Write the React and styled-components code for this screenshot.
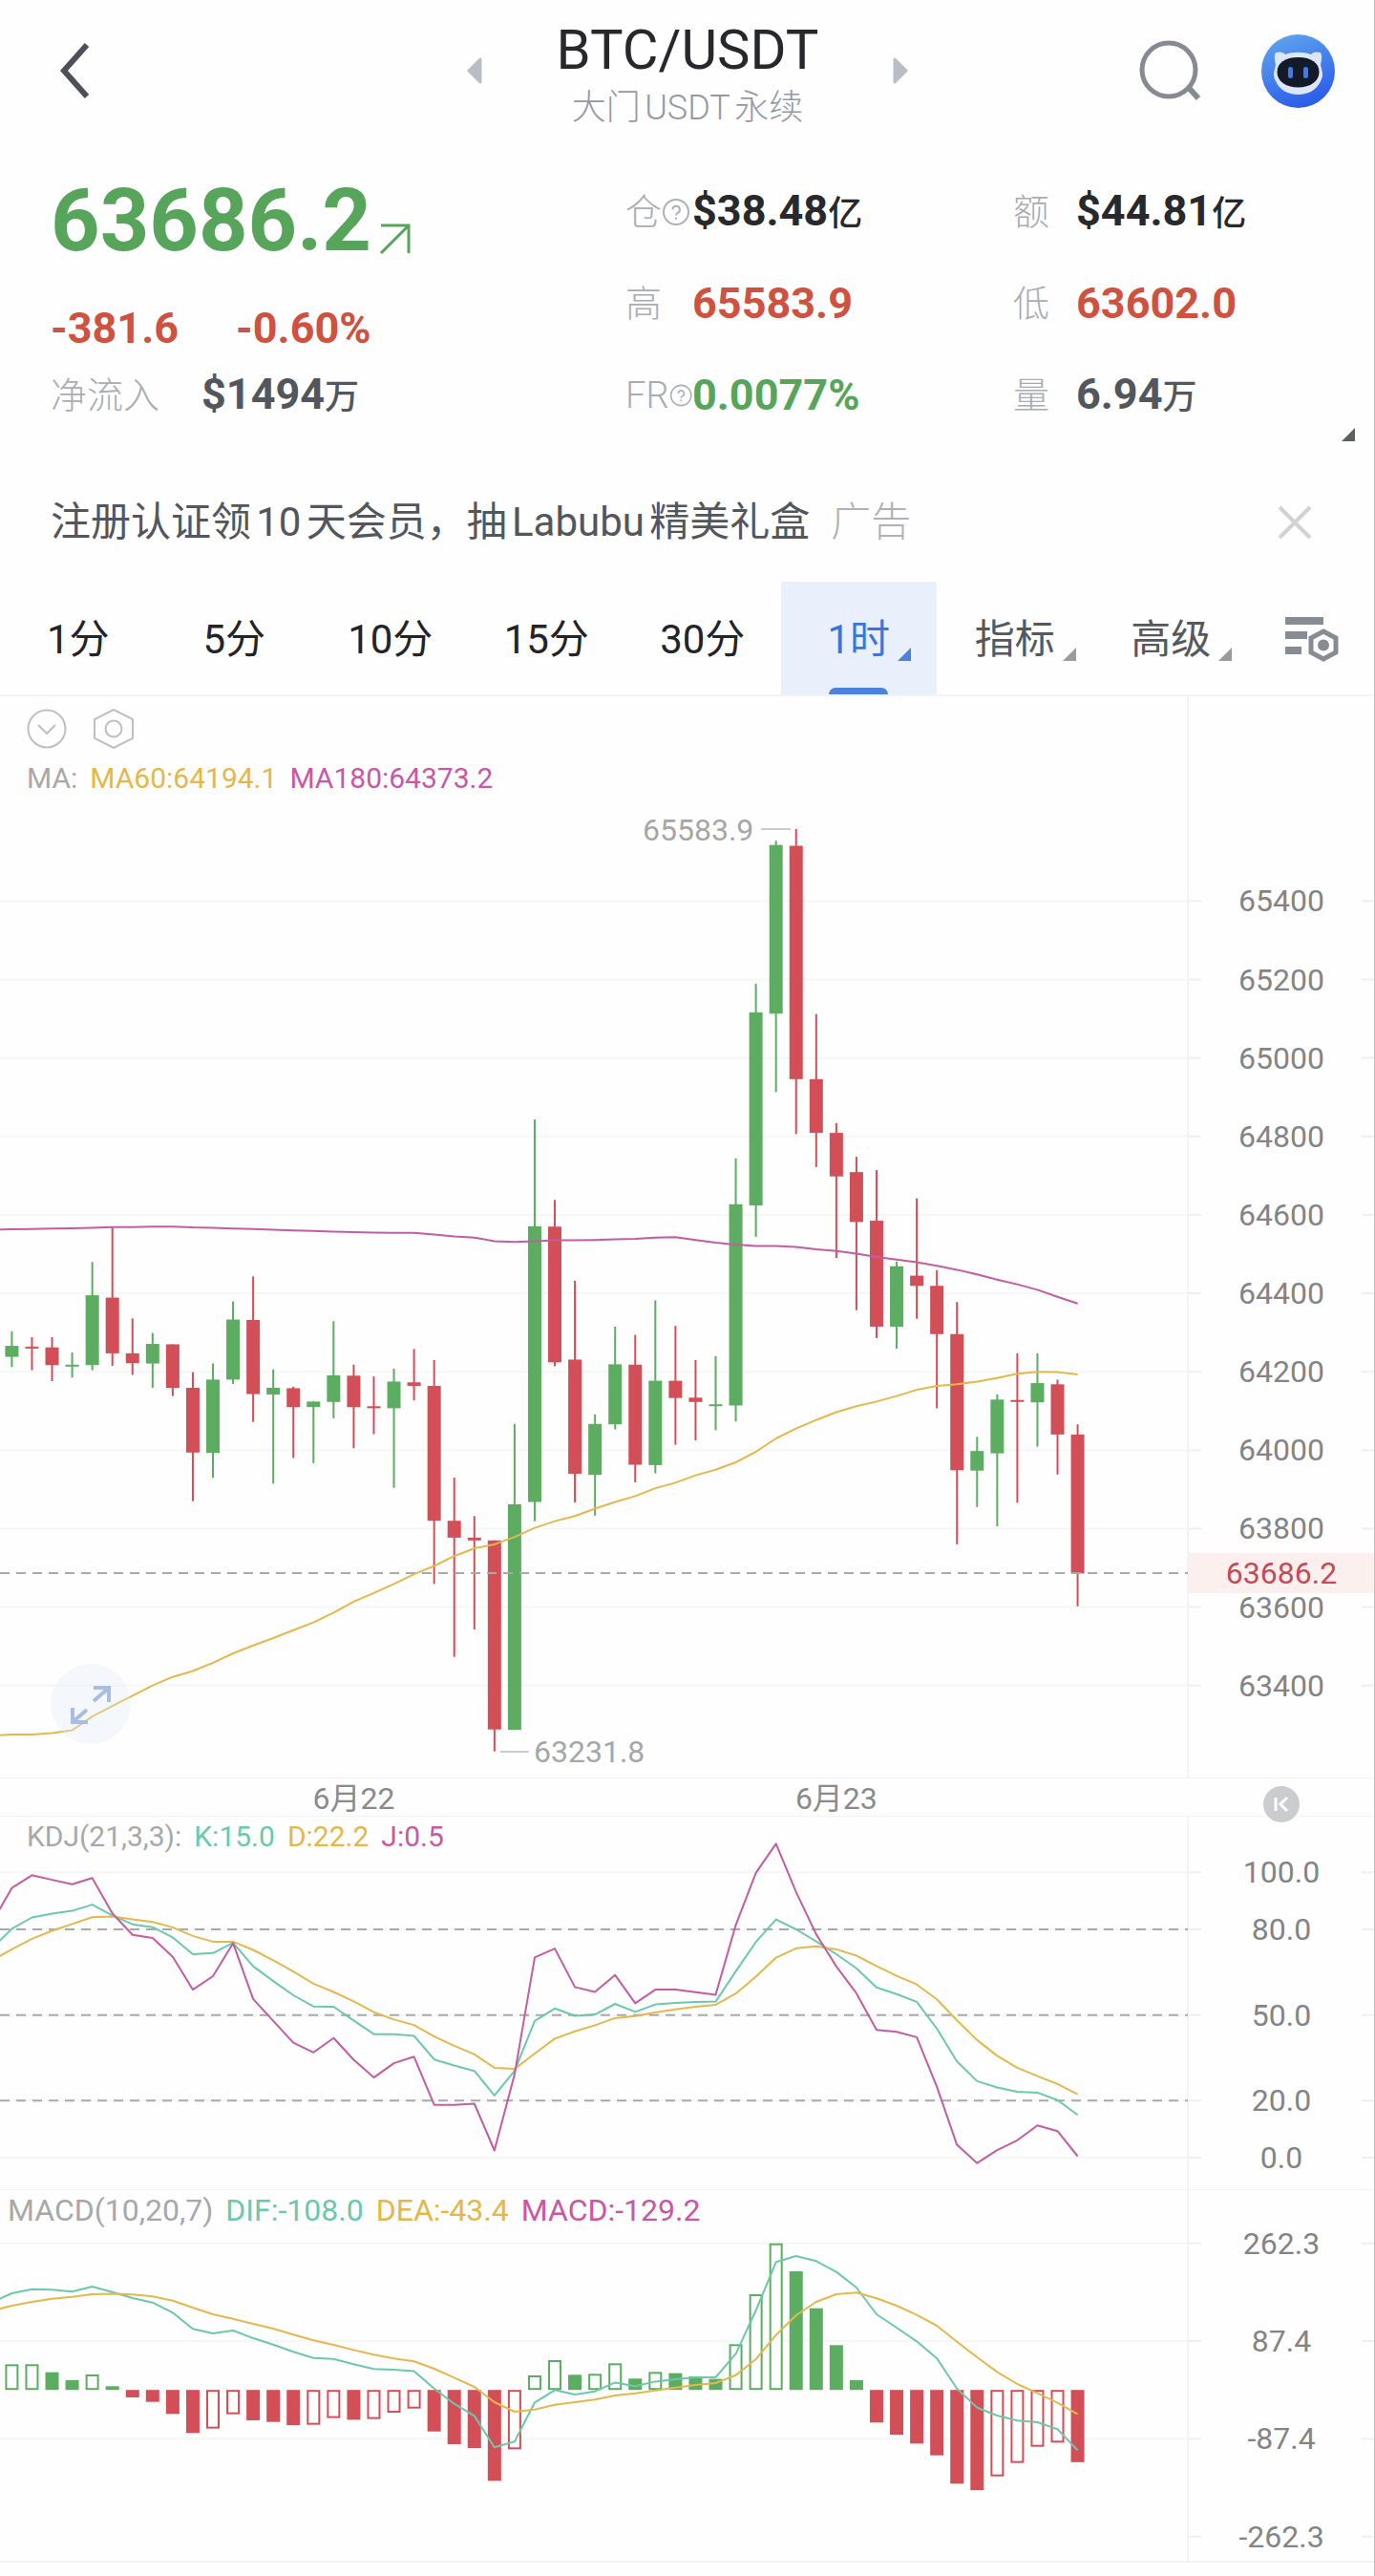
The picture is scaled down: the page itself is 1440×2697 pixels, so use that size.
import { useState } from 'react';
import styled, { createGlobalStyle } from 'styled-components';

const GREEN = '#5cad61';
const RED = '#d24f58';
const TEAL = '#6cc8ab';
const YELLOW = '#e3b84c';
const PURPLE = '#c25da4';

const GlobalStyle = createGlobalStyle`
    body {
        margin: 0;
        background: #fefefe;
        font-family: Roboto, 'Noto Sans CJK SC', sans-serif;
    }

    button {
        padding: 0;
        border: none;
        background: none;
        font: inherit;
        color: inherit;
        cursor: pointer;
    }

    svg {
        display: block;
    }
`;

const Page = styled.main`
    position: relative;
    padding-bottom: 14px;

    &:after {
        content: '';
        position: absolute;
        top: 0;
        right: 0;
        bottom: 0;
        width: 1px;
        background: #bdbfc2;
    }
`;

const Header = styled.header`
    display: grid;
    grid-template-columns: 1fr 462px 1fr;
    align-items: center;
    height: 144px;
    padding: 2px 42px 0;
`;

const HeaderSide = styled.div`
    display: flex;
    align-items: center;
    justify-content: ${props => props.$end ? 'flex-end' : 'flex-start'};
    gap: 64px;
    padding-left: ${props => props.$end ? '0' : '20px'};
`;

const PairSwitcher = styled.div`
    display: flex;
    align-items: center;
    justify-content: space-between;
`;

const PairTitle = styled.div`
    padding-top: 10px;
    text-align: center;
`;

const PairName = styled.h1`
    margin: 0;
    font-size: 58px;
    font-weight: 400;
    line-height: 68px;
    color: #26282b;
`;

const PairMarket = styled.p`
    margin: 0;
    font-size: 36px;
    font-weight: 300;
    line-height: 54px;
    color: #9599a3;
    text-autospace: normal;
`;

const Stats = styled.section`
    position: relative;
    display: grid;
    grid-template-columns: 602fr 406fr 336fr;
    padding: 28px 43px 21px 53px;
`;

const LastPrice = styled.div`
    display: flex;
    align-items: center;
    gap: 8px;
    height: 116px;
    margin-bottom: 20px;
    font-size: 90px;
    font-weight: 700;
    line-height: 116px;
    color: #57a55b;

    svg {
        margin-top: 36px;
    }
`;

const Change = styled.div`
    display: flex;
    gap: 60px;
    height: 68px;
    font-size: 45px;
    font-weight: 700;
    line-height: 68px;
    color: #cf5240;
`;

const NetFlow = styled.div`
    display: flex;
    align-items: center;
    gap: 44px;
    height: 72px;
`;

const StatRow = styled.div`
    display: grid;
    grid-template-columns: ${props => props.$label}px 1fr;
    align-items: center;
    height: 96px;
`;

const StatLabel = styled.span`
    display: flex;
    align-items: center;
    font-size: 38px;
    font-weight: 300;
    line-height: 60px;
    color: #a9adb2;
    white-space: nowrap;
`;

const StatValue = styled.span`
    font-size: 45px;
    font-weight: 700;
    line-height: 60px;
    color: ${props => props.$color || '#27292c'};
    white-space: nowrap;
`;

const Unit = styled.span`
    font-size: 36px;
    font-weight: 500;
`;

const ExpandCorner = styled.button`
    position: absolute;
    right: 21px;
    bottom: 21px;
`;

const Notice = styled.section`
    display: flex;
    align-items: center;
    height: 126px;
    box-sizing: border-box;
    padding: 2px 66px 0 53px;
    font-size: 42px;
    line-height: 60px;
    text-autospace: normal;
`;

const NoticeLink = styled.a`
    color: #53565b;
    text-decoration: none;
`;

const NoticeTag = styled.span`
    flex: 1;
    margin-left: 22px;
    font-weight: 300;
    color: #aeb1b6;
`;

const Tabs = styled.nav`
    display: grid;
    grid-template-columns: repeat(8, 1fr) 132px;
    height: 120px;
    box-sizing: border-box;
    border-bottom: 2px solid #f2f3f4;
`;

const Tab = styled.button`
    position: relative;
    padding-top: 4px;
    font-size: 42px;
    line-height: 60px;
    color: ${props => props.$active ? '#3e74da' : props.$menu ? '#55585d' : '#222427'};
    background: ${props => props.$active ? '#e9f0fb' : 'transparent'};

    &:after {
        content: '';
        position: absolute;
        display: ${props => props.$active ? 'block' : 'none'};
        left: 50%;
        bottom: 0;
        width: 62px;
        height: 7px;
        margin-left: -31px;
        border-radius: 7px 7px 0 0;
        background: #4d82dc;
    }
`;

const TabLabel = styled.span`
    position: relative;
`;

const TabCorner = styled.svg`
    position: absolute;
    left: 100%;
    bottom: 2px;
    margin-left: 8px;
    color: ${props => props.$active ? '#4d82dc' : '#9b9b9b'};
`;

const TabSettings = styled.button`
    display: flex;
    align-items: center;
    justify-content: center;
    padding-top: 2px;
`;

const Panel = styled.section`
    position: relative;
`;

const Chart = styled.svg`
    width: 100%;
    height: auto;
    font-family: Roboto, 'Noto Sans CJK SC', sans-serif;
    font-size: 32px;
`;

const ChartTools = styled.div`
    position: absolute;
    top: 13px;
    left: 28px;
    display: flex;
    gap: 28px;
`;

const Legend = styled.div`
    position: absolute;
    top: ${props => props.$top}px;
    left: ${props => props.$left}px;
    display: flex;
    gap: 13px;
    font-size: ${props => props.$large ? '32px' : '30px'};
    line-height: 40px;
    white-space: nowrap;
`;

const LegendItem = styled.span`
    color: ${props => props.$color || '#a8a8a8'};
`;

const FullScreen = styled.button`
    position: absolute;
    left: 53px;
    bottom: 36px;
    width: 84px;
    height: 84px;
    display: flex;
    align-items: center;
    justify-content: center;
    border-radius: 50%;
    background: rgba(222, 234, 252, 0.3);
`;

const LatestButton = styled.button`
    position: absolute;
    top: 8px;
    right: 79px;
    z-index: 1;
`;

// high, body top, body bottom, low, direction
const candles = [
  [64303, 64266, 64238, 64212, 1], [64288, 64264, 64264, 64204, 0], [64288, 64262, 64217, 64176, 0],
  [64249, 64218, 64216, 64185, 1], [64480, 64395, 64217, 64204, 1], [64569, 64389, 64247, 64215, 0],
  [64336, 64247, 64222, 64192, 0], [64299, 64271, 64221, 64159, 1], [64270, 64270, 64159, 64138, 0],
  [64199, 64159, 63994, 63870, 0], [64221, 64180, 63993, 63930, 1], [64379, 64333, 64180, 64169, 1],
  [64443, 64332, 64143, 64072, 0], [64206, 64159, 64142, 63915, 1], [64162, 64158, 64110, 63980, 0],
  [64125, 64124, 64110, 63967, 1], [64329, 64191, 64123, 64081, 1], [64218, 64190, 64110, 64005, 0],
  [64188, 64112, 64107, 64041, 0], [64208, 64175, 64107, 63904, 1], [64258, 64173, 64164, 64127, 0],
  [64230, 64164, 63820, 63659, 0], [63930, 63820, 63777, 63473, 0], [63832, 63777, 63770, 63543, 0],
  [63770, 63770, 63288, 63232, 0], [64067, 63862, 63287, 63287, 1], [64843, 64571, 63868, 63819, 1],
  [64638, 64570, 64224, 64214, 0], [64432, 64231, 63940, 63867, 0], [64091, 64067, 63937, 63833, 1],
  [64315, 64219, 64066, 64053, 1], [64294, 64218, 63963, 63918, 0], [64382, 64177, 63962, 63941, 1],
  [64317, 64177, 64133, 64014, 0], [64230, 64134, 64123, 64025, 0], [64240, 64117, 64114, 64051, 1],
  [64744, 64627, 64114, 64073, 1], [65189, 65116, 64624, 64544, 1], [65554, 65543, 65113, 64913, 1],
  [65584, 65541, 64946, 64806, 0], [65112, 64946, 64809, 64722, 0], [64834, 64809, 64698, 64490, 0],
  [64748, 64709, 64582, 64357, 0], [64714, 64585, 64315, 64286, 0], [64481, 64469, 64315, 64259, 1],
  [64642, 64445, 64419, 64335, 0], [64459, 64419, 64296, 64107, 0], [64378, 64296, 63949, 63760, 0],
  [64034, 63998, 63948, 63855, 1], [64142, 64129, 63992, 63806, 1], [64247, 64128, 64125, 63866, 0],
  [64247, 64171, 64122, 64009, 1], [64180, 64168, 64040, 63938, 0], [64066, 64040, 63686, 63602, 0],
];

// every line series starts one step left of the first candle
const ma180 = [
  64562, 64563, 64564, 64565, 64566, 64567, 64569, 64569, 64570, 64570, 64568, 64567, 64565, 64564,
  64562, 64560, 64559, 64557, 64556, 64555, 64554, 64554, 64550, 64545, 64542, 64533, 64531, 64533,
  64535, 64535, 64536, 64538, 64539, 64542, 64543, 64536, 64529, 64524, 64521, 64521, 64518, 64512,
  64508, 64501, 64493, 64486, 64479, 64470, 64460, 64448, 64435, 64423, 64409, 64391, 64374,
];

const ma60 = [
  63272, 63275, 63275, 63279, 63286, 63321, 63348, 63374, 63400, 63422, 63437, 63458, 63482, 63502,
  63521, 63541, 63561, 63586, 63614, 63636, 63659, 63684, 63705, 63730, 63750, 63760, 63779, 63802,
  63819, 63832, 63851, 63868, 63883, 63903, 63917, 63936, 63950, 63969, 63996, 64030, 64055, 64077,
  64097, 64112, 64124, 64138, 64154, 64164, 64168, 64175, 64184, 64195, 64200, 64199, 64193,
];

const kdjK = [
  73.3, 80.2, 84.2, 85.5, 86.5, 88.7, 84.9, 81.8, 80.8, 77.2, 71.3, 71.7, 75.3, 67.1, 61.9, 56.9, 53,
  52.9, 48.1, 43.3, 43.3, 42.7, 34.4, 32.3, 30.4, 21.8, 30.4, 47.9, 52.3, 49.7, 50.2, 53.9, 51.1, 53.7,
  54.2, 54.6, 54.7, 65.3, 75.6, 83.5, 80, 75.8, 71.3, 66.4, 59.7, 57.3, 54.6, 45.2, 33.7, 26.8, 24.6,
  23.1, 22.8, 20.2, 15,
];

const kdjD = [
  69.1, 73, 76.7, 79.5, 81.9, 84.3, 84.5, 83.5, 82.6, 80.7, 77.7, 75.7, 75.7, 72.8, 69.2, 65.2, 61,
  58.1, 54.8, 51, 48.4, 46.5, 42.5, 39.2, 36.2, 31.5, 31.1, 36.5, 41.7, 44.3, 46.4, 48.9, 49.6, 50.9,
  52, 52.9, 53.6, 57.5, 63.4, 70.1, 73.4, 74.1, 73, 70.8, 67.2, 63.7, 60.7, 55.5, 48.1, 41.2, 35.7,
  31.5, 28.6, 25.8, 22.2,
];

const kdjJ = [
  82.3, 94.5, 99, 97.4, 95.8, 98, 85.6, 78.1, 77, 70.4, 58.9, 63.6, 75.2, 55.6, 47.9, 40.3, 36.9, 41.9,
  34.3, 28.1, 33.1, 35.4, 18.5, 18.5, 18.9, 2.5, 29.2, 70.2, 73.3, 59.8, 58.1, 64, 54.1, 58.9, 58.9,
  58, 57.1, 81.6, 99.8, 110, 93.1, 78.3, 67, 57.6, 44.8, 44.1, 42.2, 24.8, 4.5, -1.9, 2.6, 6.1, 11.3,
  9.3, 0.5,
];

const dif = [
  156.4, 172.9, 180.3, 179.2, 175.8, 184.9, 175.2, 164.4, 156.4, 138.2, 109.1, 101.2, 106.3, 92.6,
  81.2, 68.1, 57.3, 55.6, 45.9, 37.4, 36.2, 33.9, 2.6, -24.7, -46.4, -102.7, -92.5, -22.4, -0.2, -8.2,
  -2.5, 13.4, 6.6, 15.1, 19.1, 22.6, 22.6, 64.7, 142.2, 228.7, 239.5, 230.4, 211.1, 183.2, 135.3,
  111.4, 86.9, 56.2, 2.6, -31.6, -45.8, -54.9, -57.8, -70.3, -108,
];

const dea = [
  141.6, 150.7, 157.5, 163.2, 166.6, 171.2, 172.3, 170.6, 167.2, 159.8, 147.3, 135.3, 127.3, 118.2,
  109.7, 98.9, 88.6, 80.6, 71.5, 63, 56.2, 51, 37.9, 22, 5.5, -21.9, -39, -35, -26.4, -21.9, -17.3,
  -9.9, -5.9, -0.8, 4.3, 8.9, 12.3, 26.5, 55, 98.3, 133.6, 157.5, 171.2, 174.1, 163.8, 150.7, 134.2,
  114.8, 86.3, 58.4, 32.2, 10.6, -5.9, -23, -43.4,
];

const macd = [
  45.9, 46, 31.7, 17.4, 27.7, 6.6, -13.3, -21.3, -42.9, -77.1, -69.1, -43.5, -54.3, -57.2, -62.9,
  -62.3, -50.3, -53.2, -52, -40.7, -33.3, -74.3, -97, -103.9, -162.5, -106.2, 26, 53.3, 27.1, 28.8,
  47.6, 20.3, 32.2, 30, 24.3, 19.7, 81.8, 171.2, 262.3, 212.2, 146.1, 80.1, 17.4, -58.3, -80, -95.9,
  -117, -167.7, -179.1, -154.6, -130.6, -101.6, -94.2, -129.2,
];

const PLOT = 1244;
const WIDTH = 1440;
const AXIS_CENTER = 1342;

const xAt = i => 12.4 + i * 21.06;
const priceY = v => 214.4 + (65400 - v) * 0.41065;
const kdjY = v => 58.3 + (100 - v) * 2.987;
const macdY = v => 209.2 - v * 0.5853;

const Line = ({ data, scale, color }) => (
  <polyline
    points={data.map((v, i) => `${xAt(i - 1).toFixed(1)},${scale(v).toFixed(1)}`).join(' ')}
    fill="none"
    stroke={color}
    strokeWidth="2"
    strokeLinejoin="round"
  />
);

const Dashed = ({ y }) => (
  <line x1="0" x2={PLOT} y1={y} y2={y} stroke="#a9a9a9" strokeWidth="2" strokeDasharray="10 7" />
);

const AxisMark = ({ y, label, grid = true }) => (
  <g>
    {grid && <line x1="0" x2={PLOT} y1={y} y2={y} stroke="#f5f6f6" strokeWidth="2" />}
    <line x1={PLOT} x2={PLOT + 14} y1={y} y2={y} stroke="#efeff0" strokeWidth="2" />
    <line x1={WIDTH - 14} x2={WIDTH} y1={y} y2={y} stroke="#efeff0" strokeWidth="2" />
    <text x={AXIS_CENTER} y={y + 11} textAnchor="middle" fill="#848484">{label}</text>
  </g>
);

const AxisBorder = ({ height }) => (
  <g stroke="#f2f3f4" strokeWidth="2">
    <line x1={PLOT} x2={PLOT} y1="0" y2={height} />
    <line x1="0" x2={WIDTH} y1={height} y2={height} />
  </g>
);

const PriceChart = () => (
  <Chart viewBox="0 0 1440 1133" role="img" aria-label="BTC/USDT">
    <AxisBorder height={1133} />
    {Array.from({ length: 11 }, (_, i) => 65400 - i * 200).map(price => (
      <AxisMark key={price} y={priceY(price)} label={price} />
    ))}
    {candles.map(([high, top, bottom, low, up], i) => {
      const color = up ? GREEN : RED;
      return (
        <g key={i} fill={color}>
          <rect x={xAt(i) - 1} y={priceY(high)} width="2" height={priceY(low) - priceY(high)} />
          <rect x={xAt(i) - 7} y={priceY(top)} width="14" height={Math.max(priceY(bottom) - priceY(top), 2)} />
        </g>
      );
    })}
    <Dashed y={918} />
    <Line data={ma180} scale={priceY} color={PURPLE} />
    <Line data={ma60} scale={priceY} color={YELLOW} />
    <g stroke="#cccccc" strokeWidth="2">
      <line x1="797" x2="828" y1="139" y2="139" />
      <line x1="524" x2="554" y1="1105" y2="1105" />
    </g>
    <text x="673" y="151" fill="#a6a6a6">65583.9</text>
    <text x="559" y="1116" fill="#a6a6a6">63231.8</text>
    <rect x={PLOT + 1} y="897" width="195" height="42" fill="#fcf0ef" />
    <text x={AXIS_CENTER} y="929" textAnchor="middle" fill="#c44b55">63686.2</text>
  </Chart>
);

const TimeChart = () => (
  <Chart viewBox="0 0 1440 40" role="img" aria-label="6月22 6月23">
    <line x1="0" x2={WIDTH} y1="40" y2="40" stroke="#f2f3f4" strokeWidth="2" />
    <text x={xAt(17)} y="32" textAnchor="middle" fill="#8a8a8a">6月22</text>
    <text x={xAt(41)} y="32" textAnchor="middle" fill="#8a8a8a">6月23</text>
  </Chart>
);

const KdjChart = () => (
  <Chart viewBox="0 0 1440 391" role="img" aria-label="KDJ">
    <AxisBorder height={391} />
    {[100, 80, 50, 20, 0].map(v => (
      <AxisMark key={v} y={kdjY(v)} label={v.toFixed(1)} />
    ))}
    {[80, 50, 20].map(v => <Dashed key={v} y={kdjY(v)} />)}
    <Line data={kdjK} scale={kdjY} color={TEAL} />
    <Line data={kdjD} scale={kdjY} color={YELLOW} />
    <Line data={kdjJ} scale={kdjY} color={PURPLE} />
  </Chart>
);

const MacdChart = () => (
  <Chart viewBox="0 0 1440 390" role="img" aria-label="MACD">
    <AxisBorder height={389} />
    {[262.3, 87.4, -87.4, -262.3].map(v => (
      <AxisMark key={v} y={macdY(v)} label={v.toFixed(1)} grid={v > -200} />
    ))}
    {macd.map((v, i) => {
      // a bar is hollow while the histogram is rising
      const hollow = i === 0 || v > macd[i - 1];
      const color = v > 0 ? GREEN : RED;
      const inset = hollow ? 1 : 0;
      return (
        <rect
          key={i}
          x={xAt(i) - 7 + inset}
          y={Math.min(macdY(v), macdY(0)) + inset}
          width={14 - inset * 2}
          height={Math.abs(macdY(v) - macdY(0)) - inset * 2}
          fill={hollow ? '#fefefe' : color}
          stroke={hollow ? color : 'none'}
          strokeWidth="2"
        />
      );
    })}
    <Line data={dif} scale={macdY} color={TEAL} />
    <Line data={dea} scale={macdY} color={YELLOW} />
  </Chart>
);

const HelpIcon = () => (
  <svg width="30" height="30" viewBox="0 0 30 30" fill="none" stroke="#adb1b6" strokeWidth="2">
    <circle cx="15" cy="15" r="13" />
    <path d="M11.500 12.500a3.700 3.700 0 1 1 5.200 3.300c-1.200.6-1.700 1.200-1.700 2.700M15 20.500v2.300" />
  </svg>
);

const CornerIcon = () => <path d="M14 0V14H0Z" fill="currentColor" />;

const RobotIcon = () => (
  <svg width="77" height="77" viewBox="0 0 77 77">
    <defs>
      <linearGradient id="robot" x1="0.2" y1="0" x2="0.6" y2="1">
        <stop offset="0" stopColor="#5fa5ee" />
        <stop offset="1" stopColor="#2b5be9" />
      </linearGradient>
    </defs>
    <circle cx="38.500" cy="38.500" r="38.500" fill="url(#robot)" />
    <path
      d="M15 19c4-1 8-1 10 2 8-3 19-3 27 0 2-3 6-3 10-2 2 4 1 8 0 13 1 4 2 7 2 10 0 3-1 5-2 7-4 9-13 14-23.500 14S19 58 15 49c-1-2-2-4-2-7 0-3 1-6 2-10-1-5-2-9 0-13z"
      fill="#dde6f8"
    />
    <path d="M38.500 24c14 0 22 6 22 15.500s-9 16-22 16-22-6.500-22-16 8-15.500 22-15.500z" fill="#131b2b" />
    <rect x="28" y="34" width="5" height="12" rx="2.500" fill="#4379ef" />
    <rect x="44" y="34" width="5" height="12" rx="2.500" fill="#4379ef" />
  </svg>
);

const tabs = [
  { label: '1分' },
  { label: '5分' },
  { label: '10分' },
  { label: '15分' },
  { label: '30分' },
  { label: '1时', corner: true },
  { label: '指标', corner: true, menu: true },
  { label: '高级', corner: true, menu: true },
];

const App = () => {
  const [active, setActive] = useState('1时');

  return (
    <Page>
      <GlobalStyle />

      <Header>
        <HeaderSide>
          <button aria-label="返回">
            <svg width="32" height="60" viewBox="0 0 32 60" fill="none" stroke="#4d5157" strokeWidth="6">
              <path d="M29 3L5 30L29 57" />
            </svg>
          </button>
        </HeaderSide>
        <PairSwitcher>
          <button aria-label="上一个">
            <svg width="17" height="28" viewBox="0 0 17 28">
              <path d="M14 2L2 14L14 26Z" fill="#b9bec6" stroke="#b9bec6" strokeWidth="3" strokeLinejoin="round" />
            </svg>
          </button>
          <PairTitle>
            <PairName>BTC/USDT</PairName>
            <PairMarket>大门USDT永续</PairMarket>
          </PairTitle>
          <button aria-label="下一个">
            <svg width="17" height="28" viewBox="0 0 17 28">
              <path d="M3 2L15 14L3 26Z" fill="#b9bec6" stroke="#b9bec6" strokeWidth="3" strokeLinejoin="round" />
            </svg>
          </button>
        </PairSwitcher>
        <HeaderSide $end>
          <button aria-label="搜索">
            <svg width="64" height="64" viewBox="0 0 64 64" fill="none" stroke="#868a92" strokeWidth="5">
              <circle cx="31" cy="31" r="28" />
              <path d="M52 50L62 61" strokeWidth="6" />
            </svg>
          </button>
          <button aria-label="助手">
            <RobotIcon />
          </button>
        </HeaderSide>
      </Header>

      <Stats>
        <div>
          <LastPrice>
            63686.2
            <svg width="34" height="34" viewBox="0 0 34 34" fill="none" stroke="#57a55b" strokeWidth="3">
              <path d="M2 3H31V32M31 3L2 32" />
            </svg>
          </LastPrice>
          <Change>
            <span>-381.6</span>
            <span>-0.60%</span>
          </Change>
          <NetFlow>
            <StatLabel>净流入</StatLabel>
            <StatValue $color="#53565d">$1494<Unit>万</Unit></StatValue>
          </NetFlow>
        </div>
        <div>
          <StatRow $label={70}>
            <StatLabel>仓<HelpIcon /></StatLabel>
            <StatValue>$38.48<Unit>亿</Unit></StatValue>
          </StatRow>
          <StatRow $label={70}>
            <StatLabel>高</StatLabel>
            <StatValue $color="#cf5240">65583.9</StatValue>
          </StatRow>
          <StatRow $label={70}>
            <StatLabel>FR<HelpIcon /></StatLabel>
            <StatValue $color="#57a55b">0.0077%</StatValue>
          </StatRow>
        </div>
        <div>
          <StatRow $label={66}>
            <StatLabel>额</StatLabel>
            <StatValue>$44.81<Unit>亿</Unit></StatValue>
          </StatRow>
          <StatRow $label={66}>
            <StatLabel>低</StatLabel>
            <StatValue $color="#cf5240">63602.0</StatValue>
          </StatRow>
          <StatRow $label={66}>
            <StatLabel>量</StatLabel>
            <StatValue $color="#53565d">6.94<Unit>万</Unit></StatValue>
          </StatRow>
        </div>
        <ExpandCorner aria-label="展开">
          <svg width="14" height="14" viewBox="0 0 14 14" color="#5c6065"><CornerIcon /></svg>
        </ExpandCorner>
      </Stats>

      <Notice>
        <NoticeLink href="#">注册认证领10天会员，抽Labubu精美礼盒</NoticeLink>
        <NoticeTag>广告</NoticeTag>
        <button aria-label="关闭">
          <svg width="36" height="36" viewBox="0 0 36 36" stroke="#d0d2d4" strokeWidth="4">
            <path d="M2 2L34 34M34 2L2 34" />
          </svg>
        </button>
      </Notice>

      <Tabs>
        {tabs.map(tab => (
          <Tab
            key={tab.label}
            $active={tab.label === active}
            $menu={tab.menu}
            onClick={() => setActive(tab.label)}
          >
            <TabLabel>
              {tab.label}
              {tab.corner && (
                <TabCorner $active={tab.label === active} width="14" height="14" viewBox="0 0 14 14">
                  <CornerIcon />
                </TabCorner>
              )}
            </TabLabel>
          </Tab>
        ))}
        <TabSettings aria-label="设置">
          <svg width="58" height="50" viewBox="0 0 58 50" fill="#868b94">
            <path d="M1 2H41V10H1ZM1 17H24V25H1ZM1 33H18V41H1Z" />
            <path d="M41 17L54 24V39L41 46L28 39V24Z" fill="none" stroke="#868b94" strokeWidth="5" />
            <circle cx="41" cy="31.500" r="6" />
          </svg>
        </TabSettings>
      </Tabs>

      <Panel>
        <PriceChart />
        <ChartTools>
          <button aria-label="收起">
            <svg width="42" height="42" viewBox="0 0 42 42" fill="none" stroke="#bcbfc3" strokeWidth="2">
              <circle cx="21" cy="21" r="19.500" />
              <path d="M12 17L21 26L30 17" />
            </svg>
          </button>
          <button aria-label="指标设置">
            <svg width="42" height="42" viewBox="0 0 42 42" fill="none" stroke="#bcbfc3" strokeWidth="2">
              <path d="M21 1L41 11V31L21 41L1 31V11Z" />
              <circle cx="21" cy="21" r="8.500" />
            </svg>
          </button>
        </ChartTools>
        <Legend $top={66} $left={28}>
          <LegendItem>MA:</LegendItem>
          <LegendItem $color="#e5b748">MA60:64194.1</LegendItem>
          <LegendItem $color="#c957a6">MA180:64373.2</LegendItem>
        </Legend>
        <FullScreen aria-label="全屏">
          <svg width="44" height="44" viewBox="0 0 44 44" fill="none" stroke="#a9bde4" strokeWidth="4">
            <path d="M25 5H41V20M41 5L25 19M3 26V41H19M3 41L18 28" />
          </svg>
        </FullScreen>
      </Panel>

      <Panel>
        <TimeChart />
        <LatestButton aria-label="最新">
          <svg width="38" height="38" viewBox="0 0 38 38">
            <circle cx="19" cy="19" r="19" fill="#cbccd0" />
            <path d="M13 12V26M25 12L18 19L25 26" fill="none" stroke="#fff" strokeWidth="3" />
          </svg>
        </LatestButton>
      </Panel>

      <Panel>
        <KdjChart />
        <Legend $top={1} $left={28}>
          <LegendItem>KDJ(21,3,3):</LegendItem>
          <LegendItem $color={TEAL}>K:15.0</LegendItem>
          <LegendItem $color="#e5b748">D:22.2</LegendItem>
          <LegendItem $color="#c957a6">J:0.5</LegendItem>
        </Legend>
      </Panel>

      <Panel>
        <MacdChart />
        <Legend $top={1} $left={8} $large>
          <LegendItem>MACD(10,20,7)</LegendItem>
          <LegendItem $color={TEAL}>DIF:-108.0</LegendItem>
          <LegendItem $color="#e5b748">DEA:-43.4</LegendItem>
          <LegendItem $color="#c957a6">MACD:-129.2</LegendItem>
        </Legend>
      </Panel>
    </Page>
  );
};

export default App;
